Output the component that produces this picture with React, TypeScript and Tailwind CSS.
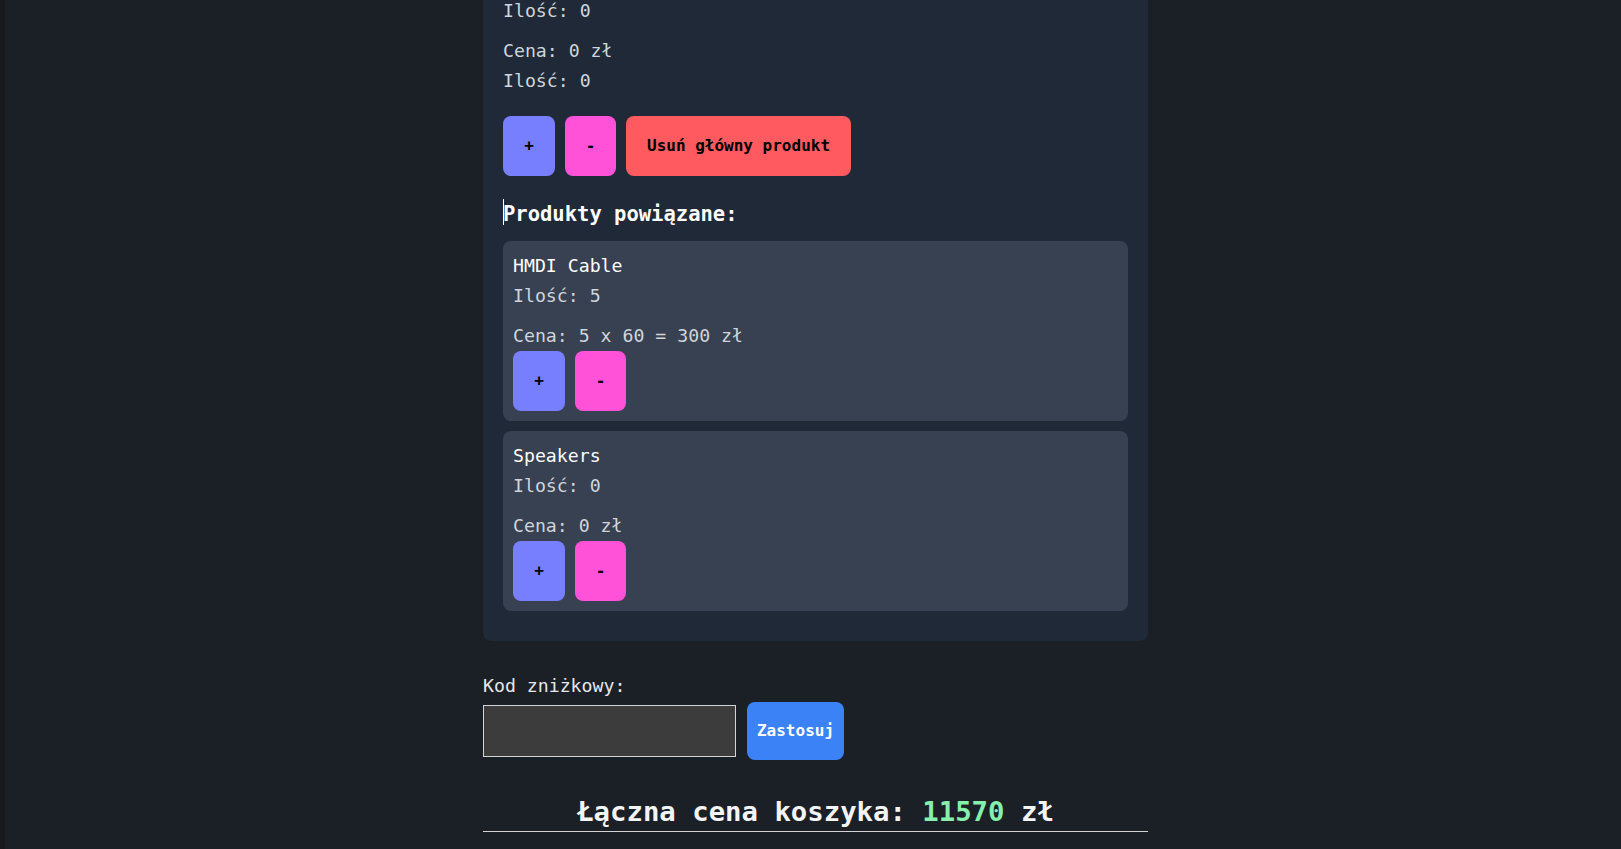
import React from 'react';

interface RelatedItem {
  name: string;
  qty: number;
  price: string;
}

const related: RelatedItem[] = [
  { name: 'HMDI Cable', qty: 5, price: '5 x 60 = 300 zł' },
  { name: 'Speakers', qty: 0, price: '0 zł' },
];

const QtyButtons: React.FC<{ withRemove?: boolean }> = ({ withRemove }) => {
  return (
    <div className="flex gap-[10px]">
      <button className="h-[60px] w-[52px] rounded-lg bg-[#787ffe] text-base font-bold leading-5 text-black">+</button>
      <button className="h-[60px] w-[51px] rounded-lg bg-[#ff52d9] text-base font-bold leading-5 text-black">-</button>
      {withRemove && (
        <button className="h-[60px] rounded-lg bg-[#ff5a5f] px-[21px] text-base font-bold leading-5 text-black">
          Usuń główny produkt
        </button>
      )}
    </div>
  );
};

const RelatedCard: React.FC<RelatedItem> = ({ name, qty, price }) => {
  return (
    <div className="rounded-lg bg-[#374151] p-[10px]">
      <p className="leading-[30px] text-white">{name}</p>
      <p className="leading-[30px] text-[#d1d5db]">Ilość: {qty}</p>
      <p className="mt-[10px] leading-[30px] text-[#d1d5db]">Cena: {price}</p>
      <QtyButtons />
    </div>
  );
};

export default function App() {
  return (
    <div className="flex h-[849px] overflow-hidden bg-[#1b1f26] text-[18.2px] font-['DejaVu_Sans_Mono',monospace]">
      <div className="w-[5px] shrink-0 bg-[#16191d]" />
      <div className="flex flex-1 justify-center pl-[5px]">
        <div className="w-[665px]">
          <div className="-mt-[24px] rounded-lg bg-[#1f2937] px-[20px] pb-[30px] pt-[20px]">
            <p className="leading-[30px] text-[#d1d5db]">Ilość: 0</p>
            <p className="mt-[10px] leading-[30px] text-[#d1d5db]">Cena: 0 zł</p>
            <p className="leading-[30px] text-[#d1d5db]">Ilość: 0</p>
            <div className="mt-[20px]">
              <QtyButtons withRemove />
            </div>

            <h3 className="relative mt-[23px] text-[20.5px] font-bold leading-[30px] text-white">
              <span className="absolute left-0 top-0 h-[26px] w-px bg-white" />
              Produkty powiązane:
            </h3>

            <div className="mt-[12px] flex flex-col gap-[10px]">
              {related.map((item) => (
                <RelatedCard key={item.name} {...item} />
              ))}
            </div>
          </div>

          <p className="mt-[30px] leading-[30px] text-[#e5e7eb]">Kod zniżkowy:</p>
          <div className="mt-[1px] flex items-center gap-[11px]">
            <input className="h-[52px] w-[253px] border border-[#d4d4d4] bg-[#3c3c3c] px-2 text-white outline-none" />
            <button className="h-[58px] w-[97px] rounded-lg bg-[#3b82f6] text-base font-bold text-white">Zastosuj</button>
          </div>

          <h2 className="mt-[36px] border-b border-[#d4d4d4] pb-[3px] text-center text-[27.3px] font-bold leading-[32px] text-[#f3f4f6]">
            Łączna cena koszyka: <span className="text-[#86efac]">11570</span> zł
          </h2>
        </div>
      </div>
    </div>
  );
}
